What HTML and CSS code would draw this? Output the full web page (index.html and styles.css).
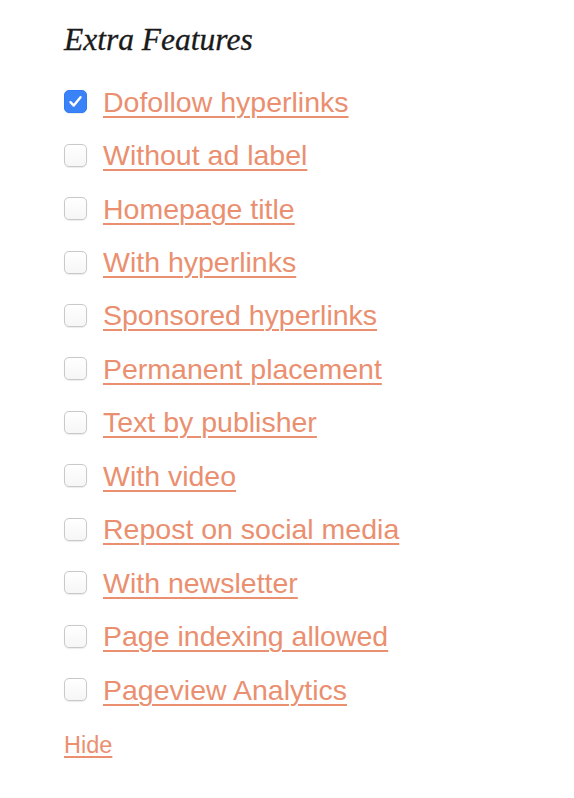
FILE: index.html
```html
<!DOCTYPE html>
<html lang="en">
<head>
<meta charset="utf-8">
<title>Extra Features</title>
<link rel="stylesheet" href="styles.css">
</head>
<body>
<section class="features">
  <h2 class="heading">Extra Features</h2>
  <ul class="list">
    <li class="row"><label class="opt"><input type="checkbox" class="box" checked><a href="#" class="link">Dofollow hyperlinks</a></label></li>
    <li class="row"><label class="opt"><input type="checkbox" class="box"><a href="#" class="link">Without ad label</a></label></li>
    <li class="row"><label class="opt"><input type="checkbox" class="box"><a href="#" class="link">Homepage title</a></label></li>
    <li class="row"><label class="opt"><input type="checkbox" class="box"><a href="#" class="link">With hyperlinks</a></label></li>
    <li class="row"><label class="opt"><input type="checkbox" class="box"><a href="#" class="link">Sponsored hyperlinks</a></label></li>
    <li class="row"><label class="opt"><input type="checkbox" class="box"><a href="#" class="link">Permanent placement</a></label></li>
    <li class="row"><label class="opt"><input type="checkbox" class="box"><a href="#" class="link">Text by publisher</a></label></li>
    <li class="row"><label class="opt"><input type="checkbox" class="box"><a href="#" class="link">With video</a></label></li>
    <li class="row"><label class="opt"><input type="checkbox" class="box"><a href="#" class="link">Repost on social media</a></label></li>
    <li class="row"><label class="opt"><input type="checkbox" class="box"><a href="#" class="link">With newsletter</a></label></li>
    <li class="row"><label class="opt"><input type="checkbox" class="box"><a href="#" class="link">Page indexing allowed</a></label></li>
    <li class="row"><label class="opt"><input type="checkbox" class="box"><a href="#" class="link">Pageview Analytics</a></label></li>
  </ul>
  <a href="#" class="hide">Hide</a>
</section>
</body>
</html>
```

FILE: styles.css
```css
html, body {
  margin: 0;
  padding: 0;
  background: #ffffff;
}

.features {
  padding: 22px 0 0 64px;
  font-family: "Liberation Sans", Arial, Helvetica, sans-serif;
}

.heading {
  margin: 0 0 17px 0;
  font-family: "Liberation Serif", "Times New Roman", serif;
  font-style: italic;
  font-weight: normal;
  font-size: 31.5px;
  line-height: 36px;
  color: #1a1a1a;
  -webkit-text-stroke: 0.3px #1a1a1a;
}

.list {
  list-style: none;
  margin: 0;
  padding: 0;
  display: flex;
  flex-direction: column;
}

.row {
  height: 53.45px;
  display: flex;
  align-items: center;
}

.opt {
  display: flex;
  align-items: center;
  gap: 16px;
}

.box {
  appearance: none;
  -webkit-appearance: none;
  margin: 0;
  width: 23px;
  height: 23px;
  border: 1px solid #c9c9c9;
  border-radius: 5px;
  background: linear-gradient(#ffffff, #f6f6f6);
  box-shadow: 0 0.5px 1px rgba(0, 0, 0, 0.08);
  box-sizing: border-box;
  flex: none;
}

.box:checked {
  border-color: #2f7cf6;
  background-color: #3a82f7;
  background-image: url("data:image/svg+xml,%3Csvg xmlns='http://www.w3.org/2000/svg' viewBox='0 0 23 23'%3E%3Cpath d='M6 12.2 L9.6 16 L17 6.8' fill='none' stroke='white' stroke-width='2.6' stroke-linecap='round' stroke-linejoin='round'/%3E%3C/svg%3E");
  background-size: 100% 100%;
}

.link {
  font-size: 28.5px;
  line-height: 32px;
  color: #ea8f6f;
  text-decoration: underline;
  text-decoration-thickness: 2px;
  text-underline-offset: 4px;
}

.hide {
  display: inline-block;
  margin-top: 16px;
  font-size: 23.5px;
  line-height: 26px;
  color: #ea8f6f;
  text-decoration: underline;
  text-decoration-thickness: 1.5px;
  text-underline-offset: 3px;
}
```
